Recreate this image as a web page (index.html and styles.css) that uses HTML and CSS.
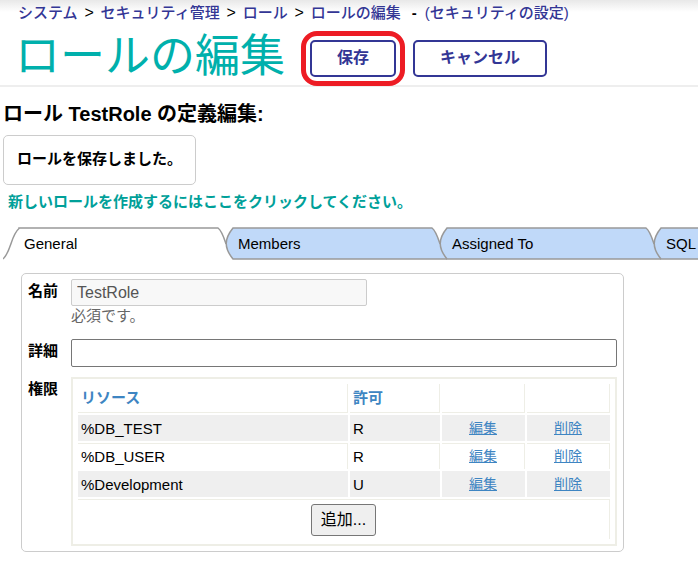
FILE: index.html
```html
<!DOCTYPE html>
<html lang="ja">
<head>
<meta charset="utf-8">
<title>ロールの編集</title>
<link rel="stylesheet" href="styles.css">
</head>
<body>
<header class="page-header">
  <nav class="crumbs">
    <a href="#">システム</a><span class="sep">&gt;</span><a href="#">セキュリティ管理</a><span class="sep">&gt;</span><a href="#">ロール</a><span class="sep">&gt;</span><a href="#">ロールの編集</a><span class="dash">-</span><a href="#">(セキュリティの設定)</a>
  </nav>
  <div class="title-row">
    <h1 class="title">ロールの編集</h1>
    <div class="actions">
      <button class="action marked" type="submit" form="role-form">保存</button>
      <button class="action" type="button">キャンセル</button>
    </div>
  </div>
</header>
<main>
  <h2 class="subtitle">ロール TestRole の定義編集:</h2>
  <p class="message">ロールを保存しました。</p>
  <a class="create-link" href="#">新しいロールを作成するにはここをクリックしてください。</a>
  <div class="tabs" role="tablist">
    <button class="tab active" type="button" role="tab" aria-selected="true">
      <svg class="tab-shape" viewBox="0 0 230 33" aria-hidden="true"><path d="M0 32C8 25 8 8 16 1.500V1H215C219 4 221 11 223 17"/></svg>
      <span class="tab-label">General</span>
    </button>
    <button class="tab" type="button" role="tab" aria-selected="false">
      <svg class="tab-shape" viewBox="0 0 230 33" aria-hidden="true"><path class="fill" d="M16 1H215C219 4 221 11 223 17C225 23 227 29 230 32H16C7 21 7 12 16 1Z"/><path d="M230 32H16C7 21 7 12 16 1H215C219 4 221 11 223 17"/></svg>
      <span class="tab-label">Members</span>
    </button>
    <button class="tab" type="button" role="tab" aria-selected="false">
      <svg class="tab-shape" viewBox="0 0 230 33" aria-hidden="true"><path class="fill" d="M16 1H215C219 4 221 11 223 17C225 23 227 29 230 32H16C7 21 7 12 16 1Z"/><path d="M230 32H16C7 21 7 12 16 1H215C219 4 221 11 223 17"/></svg>
      <span class="tab-label">Assigned To</span>
    </button>
    <button class="tab" type="button" role="tab" aria-selected="false">
      <svg class="tab-shape" viewBox="0 0 230 33" aria-hidden="true"><path class="fill" d="M16 1H215C219 4 221 11 223 17C225 23 227 29 230 32H16C7 21 7 12 16 1Z"/><path d="M230 32H16C7 21 7 12 16 1H215C219 4 221 11 223 17"/></svg>
      <span class="tab-label">SQL</span>
    </button>
  </div>
  <form class="panel" id="role-form">
    <label class="label" for="name">名前</label>
    <div class="field">
      <input class="text name" id="name" type="text" value="TestRole" disabled>
      <span class="hint">必須です。</span>
    </div>
    <label class="label" for="desc">詳細</label>
    <input class="text" id="desc" type="text">
    <span class="label" id="priv-label">権限</span>
    <div class="grid-frame">
      <table class="grid" aria-labelledby="priv-label">
        <colgroup><col><col class="perm"><col class="cmd"><col class="cmd"></colgroup>
        <thead>
          <tr><th>リソース</th><th>許可</th><th></th><th></th></tr>
        </thead>
        <tbody>
          <tr class="odd"><td>%DB_TEST</td><td>R</td><td class="link"><a href="#">編集</a></td><td class="link"><a href="#">削除</a></td></tr>
          <tr><td>%DB_USER</td><td>R</td><td class="link"><a href="#">編集</a></td><td class="link"><a href="#">削除</a></td></tr>
          <tr class="odd"><td>%Development</td><td>U</td><td class="link"><a href="#">編集</a></td><td class="link"><a href="#">削除</a></td></tr>
        </tbody>
        <tfoot>
          <tr><td colspan="4"><button class="add" type="button">追加...</button></td></tr>
        </tfoot>
      </table>
    </div>
  </form>
</main>
</body>
</html>
```
FILE: styles.css
```css
* {
  box-sizing: border-box;
}

body {
  margin: 0;
  background: #fff;
  color: #000;
  font: 15px/20px "Liberation Sans", "Noto Sans CJK JP", sans-serif;
}

button,
input {
  font-family: inherit;
}

.page-header {
  border-bottom: 2px solid #eee;
  background: linear-gradient(#e8e8e8, #fff 12px);
}

.crumbs {
  display: flex;
  padding: 3px 0 0 18px;
  font-weight: 500;
  white-space: nowrap;
}

.crumbs a {
  color: #333695;
  text-decoration: none;
}

.sep {
  width: 23px;
  text-align: center;
  font-size: 16px;
}

.dash {
  width: 24px;
  padding-left: 11px;
  font-weight: bold;
}

.title-row {
  display: flex;
  align-items: center;
  gap: 25px;
  padding-left: 15px;
  height: 62px;
}

.title {
  margin: 0;
  padding-top: 6px;
  color: #00b0ac;
  font-size: 45px;
  line-height: 56px;
  font-weight: 400;
  white-space: nowrap;
}

.actions {
  display: flex;
  gap: 17px;
  padding-top: 8px;
}

.action {
  position: relative;
  height: 37px;
  padding: 0 25px;
  border: 2px solid #333695;
  border-radius: 5px;
  background: #fff;
  color: #333695;
  font-size: 16px;
  line-height: 24px;
  font-weight: 700;
  white-space: nowrap;
}

.marked::after {
  content: "";
  position: absolute;
  inset: -11px;
  border: 5px solid #ed1c24;
  border-radius: 16px;
}

.subtitle {
  margin: 13px 3px 7px;
  font-size: 20px;
  line-height: 28px;
}

.message {
  width: fit-content;
  margin: 0 3px 7px;
  padding: 13px 13px 15px;
  border: 1px solid #ccc;
  border-radius: 5px;
  font-weight: bold;
}

.create-link {
  display: block;
  margin: 0 8px 15px;
  color: #00a099;
  font-weight: bold;
  text-decoration: none;
}

.tabs {
  display: flex;
  height: 34px;
  padding-left: 12px;
  overflow: hidden;
}

.tab {
  position: relative;
  flex: 0 0 214px;
  padding: 0 12px;
  border: 0;
  background: none;
  color: #000;
  font-size: 15px;
  line-height: 20px;
  text-align: left;
}

.tab-shape {
  position: absolute;
  top: 0;
  left: -9px;
  width: 230px;
  height: 33px;
  fill: none;
  stroke: #999;
  stroke-width: 1.5;
}

.tab-shape .fill {
  fill: #c0d9f9;
  stroke: none;
}

.tab-label {
  position: relative;
}

.panel {
  display: grid;
  grid-template-columns: 43px 1fr;
  row-gap: 10px;
  max-width: 603px;
  margin: 12px 21px 0;
  padding: 5px 6px;
  border: 1px solid #ccc;
  border-radius: 5px;
}

.label {
  padding-top: 2px;
  font-weight: bold;
}

.field {
  display: flex;
  flex-direction: column;
  height: 50px;
}

.text {
  width: 100%;
  height: 28px;
  padding: 1px 5px;
  border: 1px solid #767676;
  border-radius: 2px;
  background: #fff;
  font-size: 16px;
}

.name {
  flex: none;
  max-width: 296px;
  height: 27px;
  border-color: #ccc;
  background: #f8f8f8;
  color: #545454;
}

.hint {
  color: #666;
}

.grid-frame {
  padding: 3px;
  border: 2px solid #eeeee6;
}

.grid {
  width: 100%;
  table-layout: fixed;
  border-collapse: separate;
  border-spacing: 2px;
}

.perm {
  width: 90px;
}

.cmd {
  width: 83px;
}

.grid th,
.grid td {
  height: 26px;
  padding: 2px 3px;
  text-align: left;
}

.grid th {
  height: 29px;
  border-right: 1px solid #eeeee6;
  border-bottom: 1px solid #eeeee6;
  color: #3e85c2;
}

.grid tbody td {
  border-top: 1px solid #eeeee6;
  border-right: 1px solid #eeeee6;
}

.grid .odd td {
  border-color: #efefef;
  background: #efefef;
}

.grid .link {
  padding: 1px 3px 3px;
  text-align: center;
}

.link a {
  color: #3e85c2;
  font-size: 14px;
}

.grid tfoot td {
  height: 40px;
  border-top: 1px solid #eeeee6;
  border-right: 1px solid #eeeee6;
  text-align: center;
}

.add {
  height: 32px;
  padding: 0 9px;
  border: 1px solid #767676;
  border-radius: 3px;
  background: #efefef;
  color: #000;
  font-size: 16px;
  line-height: 24px;
}
```
